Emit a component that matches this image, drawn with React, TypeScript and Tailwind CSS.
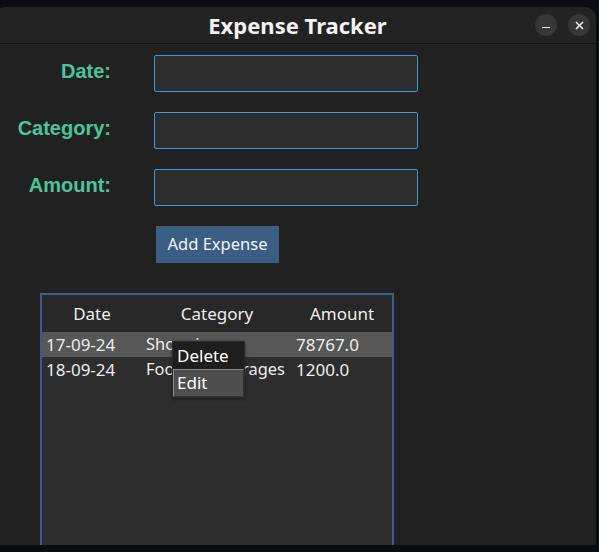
export default function App() {
  const rows = [
    { date: "17-09-24", category: "Shopping", amount: "78767.0", selected: true },
    { date: "18-09-24", category: "Food & Beverages", amount: "1200.0", selected: false },
  ];
  const fields = ["Date:", "Category:", "Amount:"];

  return (
    <div className="w-[599px] h-[552px] bg-[#0b0d11] overflow-hidden pt-[7px]">
      <div className="relative -ml-[6px] w-[602px] h-[538px] bg-[#212121] rounded-t-[12px] flex flex-col overflow-hidden">
        {/* title bar */}
        <div className="h-[37px] shrink-0 bg-[#232323] border-b border-[#111214] flex items-center justify-center relative pl-[5px]">
          <span className="text-[22px] font-bold text-[#f2f2f2] leading-none" style={{ fontFamily: '"Noto Sans", sans-serif' }}>
            Expense Tracker
          </span>
          <div className="absolute right-[6px] top-[7px] flex gap-[11px]">
            <div className="w-[22px] h-[22px] rounded-full bg-[#373737] flex items-center justify-center">
              <div className="w-[8px] h-[1.5px] bg-[#e8e8e8] mt-[5px]" />
            </div>
            <div className="w-[22px] h-[22px] rounded-full bg-[#373737] flex items-center justify-center">
              <svg width="9" height="9" viewBox="0 0 9 9">
                <path d="M1 1L8 8M8 1L1 8" stroke="#eeeeee" strokeWidth="1.6" />
              </svg>
            </div>
          </div>
        </div>

        {/* form */}
        <div className="flex flex-col gap-[20px] pt-[11px]" style={{ fontFamily: '"Liberation Sans", Arial, sans-serif' }}>
          {fields.map((f) => (
            <div key={f} className="flex items-center">
              <div className="w-[117px] text-right text-[20px] font-bold text-[#4cc59a] leading-none -mt-[6px]">{f}</div>
              <div className="ml-[43px] w-[264px] h-[37px] bg-[#2d2d2d] border border-[#3a96dd] rounded-[2px]" />
            </div>
          ))}
          <div className="pl-[162px]">
            <button
              className="w-[123px] h-[37px] bg-[#3a5e84] text-[16.5px] text-[#f4f4f4] flex items-center justify-center"
              style={{ fontFamily: '"Noto Sans", sans-serif' }}
            >
              Add Expense
            </button>
          </div>
        </div>

        {/* table */}
        <div
          className="relative mt-[30px] ml-[46px] w-[354px] flex-1 border-2 border-b-0 border-[#3b5d86] bg-[#2e2e2e] text-[17px] text-[#ececec]"
          style={{ fontFamily: '"Noto Sans", sans-serif' }}
        >
          <div className="h-[37px] bg-[#282828] flex items-center">
            <div className="w-[100px] text-center">Date</div>
            <div className="w-[150px] text-center">Category</div>
            <div className="w-[100px] text-center">Amount</div>
          </div>
          {rows.map((r) => (
            <div key={r.date} className={`h-[25px] flex items-center whitespace-nowrap ${r.selected ? "bg-[#575757]" : ""}`}>
              <div className="w-[100px] pl-[4px]">{r.date}</div>
              <div className="w-[150px] pl-[4px] text-[16.4px]">{r.category}</div>
              <div className="w-[100px] pl-[4px]">{r.amount}</div>
            </div>
          ))}

          {/* context menu */}
          <div className="absolute left-[130px] top-[46px] w-[73px] bg-[#1e1e1e] border border-[#2a2a2a] shadow-[0_1px_3px_rgba(0,0,0,0.5)]">
            <div className="h-[27px] flex items-center pl-[4px] text-white">Delete</div>
            <div className="h-[28px] flex items-center pl-[3px] bg-[#4e4e4e] border border-t-[#8a8a8a] border-l-[#8a8a8a] border-r-[#333333] border-b-[#333333] text-white">
              Edit
            </div>
          </div>
        </div>
      </div>
    </div>
  );
}
